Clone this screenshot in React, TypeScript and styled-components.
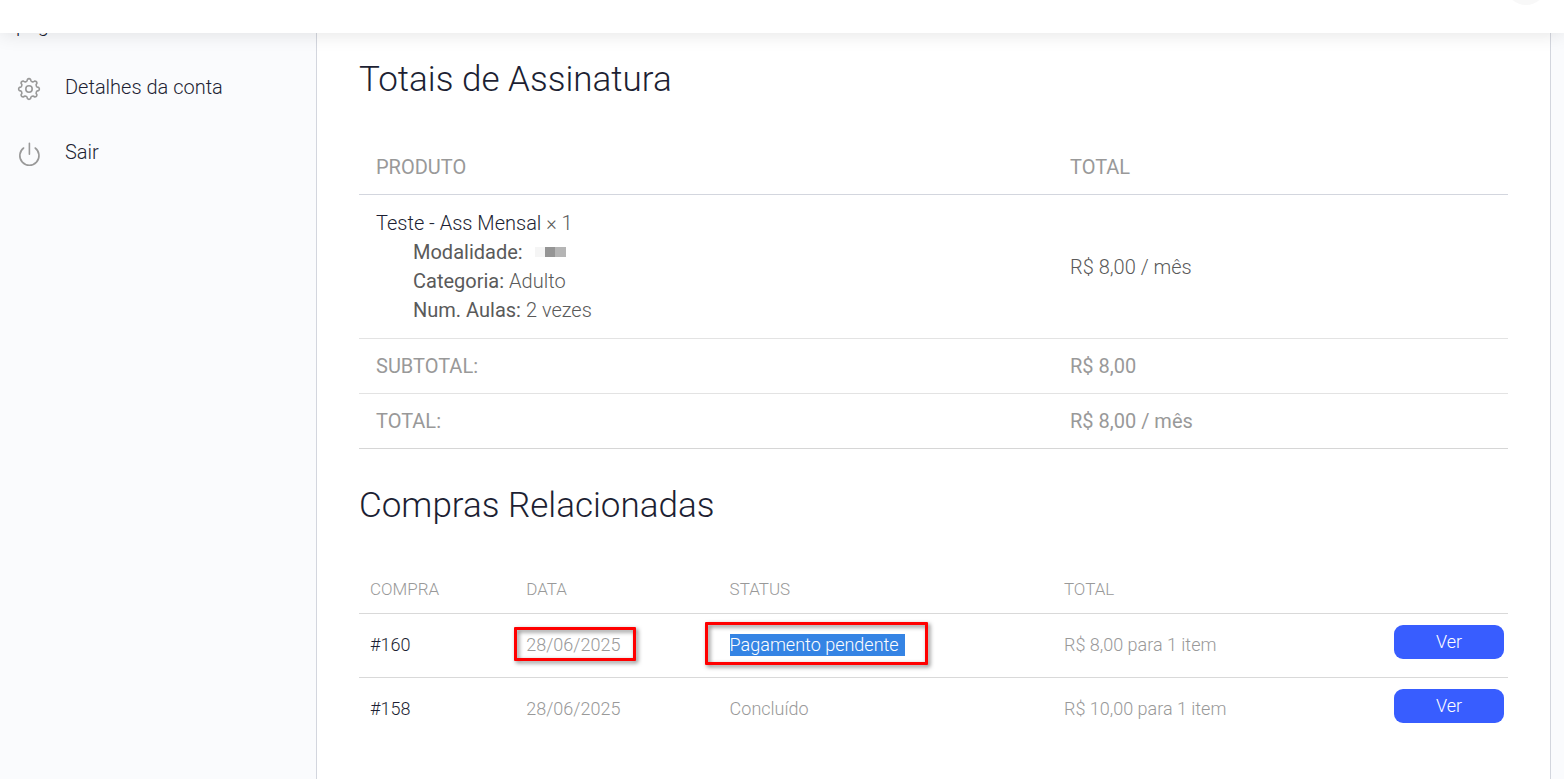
import React from 'react';
import styled, { createGlobalStyle } from 'styled-components';

const GlobalStyle = createGlobalStyle`
  *, *::before, *::after { box-sizing: border-box; }
  body {
    margin: 0;
    background: #fafbfd;
    color: #5a5a5a;
    font-family: Roboto, "Liberation Sans", sans-serif;
    font-size: 20px;
    font-weight: 300;
    line-height: 29px;
  }
  a { color: #1d1f33; text-decoration: none; }
`;

const TopBar = styled.header`
  position: fixed;
  z-index: 2;
  top: 0;
  left: 0;
  right: 0;
  height: 33px;
  display: flex;
  justify-content: flex-end;
  align-items: flex-end;
  padding: 0 18px 28px 0;
  background: #fff;
  box-shadow: 0 0 20px rgba(0, 0, 0, 0.12);
`;

const Avatar = styled.span`
  flex: none;
  width: 40px;
  height: 40px;
  border-radius: 50%;
  background: #f8f8f8;
`;

const Page = styled.div`
  display: flex;
  min-height: 100vh;
`;

const Sidebar = styled.nav`
  flex: none;
  width: 316px;
  padding-top: 13px;
`;

const Menu = styled.ul`
  display: flex;
  flex-direction: column;
  gap: 36px;
  margin: 0;
  padding: 0 16px;
  list-style: none;
  li:first-child { line-height: 24px; }
`;

const MenuLink = styled.a`
  display: flex;
  gap: 23px;
  svg { flex: none; margin-top: 3px; }
`;

const Panel = styled.main`
  flex: 1;
  min-width: 0;
  margin-right: 13px;
  padding: 59px 42px 40px;
  background: #fff;
  border: solid #d3d6de;
  border-width: 0 1px;
`;

const Heading = styled.h2`
  margin: 0 0 39px;
  color: #1d1f33;
  font-size: 35px;
  font-weight: 300;
  line-height: 42px;
`;

const Totals = styled.table`
  width: 100%;
  margin-bottom: 36px;
  border-collapse: collapse;
  table-layout: fixed;
  text-align: left;
  th, td {
    padding: 13px 17px;
    border-bottom: 1px solid #e3e3e3;
    font-weight: 300;
    line-height: 28px;
  }
  thead th { border-color: #d3d6de; }
  tbody td { padding-top: 14px; line-height: 29px; }
  thead th, tfoot th, tfoot td { color: #999; font-weight: 400; }
  tfoot tr:last-child > * { border-color: #d6d6d6; }
`;

const Options = styled.dl`
  margin: 0 0 0 37px;
  dt { font-weight: 400; }
  dd { margin: 0; }
`;

const Option = styled.div`
  display: flex;
  gap: 5px;
`;

const Redacted = styled.span`
  display: block;
  width: 31px;
  height: 10px;
  margin: 9px 0 0 7px;
  background: linear-gradient(90deg, #f5f5f5 10px, #959595 10px 20px, #b5b5b5 20px);
`;

const Orders = styled.table`
  width: 100%;
  border-collapse: collapse;
  table-layout: fixed;
  text-align: left;
  color: #999;
  font-size: 18px;
  th {
    padding: 9px 11px 10px;
    border-bottom: 1px solid #d9d9d9;
    font-size: 17px;
    font-weight: 300;
    line-height: 28px;
  }
  td { height: 64px; padding: 0 11px 2px; line-height: 22px; }
  tbody tr + tr td { border-top: 1px solid #d9d9d9; }
  td:last-child { padding: 0 4px 8px 0; text-align: right; }
`;

const Column = styled.col<{ $share?: number }>`
  width: ${({ $share }) => ($share ? `${$share}%` : 'auto')};
`;

const Marked = styled.span`
  position: relative;
`;

const Marker = styled.span<{ $left: number; $top: number; $right: number; $bottom: number }>`
  position: absolute;
  top: -${({ $top }) => $top}px;
  right: -${({ $right }) => $right}px;
  bottom: -${({ $bottom }) => $bottom}px;
  left: -${({ $left }) => $left}px;
  border: 3px solid #f00;
  border-radius: 1px;
  filter: drop-shadow(2px 2px 2px rgba(0, 0, 0, 0.5));
`;

const Selection = styled.span`
  display: inline-block;
  padding-right: 6px;
  background: #3584e4;
  color: #fff;
`;

const ViewButton = styled.button`
  width: 110px;
  height: 34px;
  padding: 0;
  border: 0;
  border-radius: 9px;
  background: #385dff;
  color: #fff;
  font: inherit;
  vertical-align: middle;
`;

/* Eight rounded teeth joined by concave arcs. */
const gearPoint = (degrees: number) => {
  const angle = (degrees * Math.PI) / 180;
  return `${(13 + 9.7 * Math.cos(angle)).toFixed(2)} ${(13 + 9.7 * Math.sin(angle)).toFixed(2)}`;
};

const gearPath =
  `M${gearPoint(-9.5)}` +
  [0, 45, 90, 135, 180, 225, 270, 315]
    .map((tooth) => `A2 2 0 0 1 ${gearPoint(tooth + 9.5)}A2.3 2.3 0 0 0 ${gearPoint(tooth + 35.5)}`)
    .join('') +
  'Z';

const GearIcon = () => (
  <svg width="26" height="26" viewBox="0 0 26 26" fill="none" stroke="#999" strokeWidth="1.6" strokeLinejoin="round" aria-hidden="true">
    <path d={gearPath} />
    <circle cx="13" cy="13" r="3.2" />
  </svg>
);

const PowerIcon = () => (
  <svg width="26" height="26" viewBox="0 0 26 26" fill="none" stroke="#999" strokeWidth="1.6" strokeLinecap="round" aria-hidden="true">
    <path d="M13.400 2.200v11M7.600 7a9.600 9.600 0 1 0 11.600 0" />
  </svg>
);

const orders = [
  { id: '#160', date: '28/06/2025', status: 'Pagamento pendente', total: 'R$ 8,00 para 1 item', pending: true },
  { id: '#158', date: '28/06/2025', status: 'Concluído', total: 'R$ 10,00 para 1 item', pending: false },
];

export default function App() {
  return (
    <>
      <GlobalStyle />
      <TopBar><Avatar /></TopBar>
      <Page>
        <Sidebar aria-label="Minha conta">
          <Menu>
            <li><MenuLink href="#pagamento">pagamento</MenuLink></li>
            <li><MenuLink href="#conta"><GearIcon />Detalhes da conta</MenuLink></li>
            <li><MenuLink href="#sair"><PowerIcon />Sair</MenuLink></li>
          </Menu>
        </Sidebar>
        <Panel>
          <Heading>Totais de Assinatura</Heading>
          <Totals>
            <colgroup><Column $share={60.4} /><Column /></colgroup>
            <thead>
              <tr><th scope="col">PRODUTO</th><th scope="col">TOTAL</th></tr>
            </thead>
            <tbody>
              <tr>
                <td>
                  <a href="#produto">Teste - Ass Mensal</a> × 1
                  <Options>
                    <Option><dt>Modalidade:</dt><dd><Redacted /></dd></Option>
                    <Option><dt>Categoria:</dt><dd>Adulto</dd></Option>
                    <Option><dt>Num. Aulas:</dt><dd>2 vezes</dd></Option>
                  </Options>
                </td>
                <td>R$ 8,00 / mês</td>
              </tr>
            </tbody>
            <tfoot>
              <tr><th scope="row">SUBTOTAL:</th><td>R$ 8,00</td></tr>
              <tr><th scope="row">TOTAL:</th><td>R$ 8,00 / mês</td></tr>
            </tfoot>
          </Totals>
          <Heading>Compras Relacionadas</Heading>
          <Orders>
            <colgroup>
              <Column $share={13.6} /><Column $share={17.7} /><Column $share={29.1} /><Column $share={28} /><Column />
            </colgroup>
            <thead>
              <tr><th scope="col">COMPRA</th><th scope="col">DATA</th><th scope="col">STATUS</th><th scope="col">TOTAL</th><th aria-label="Ações" /></tr>
            </thead>
            <tbody>
              {orders.map((order) => (
                <tr key={order.id}>
                  <td><a href="#compra">{order.id}</a></td>
                  <td>
                    <Marked>
                      {order.date}
                      {order.pending && <Marker $left={12} $top={7} $right={16} $bottom={6} />}
                    </Marked>
                  </td>
                  <td>
                    <Marked>
                      {order.pending ? <Selection>{order.status}</Selection> : order.status}
                      {order.pending && <Marker $left={25} $top={12} $right={23} $bottom={10} />}
                    </Marked>
                  </td>
                  <td>{order.total}</td>
                  <td><ViewButton type="button">Ver</ViewButton></td>
                </tr>
              ))}
            </tbody>
          </Orders>
        </Panel>
      </Page>
    </>
  );
}
